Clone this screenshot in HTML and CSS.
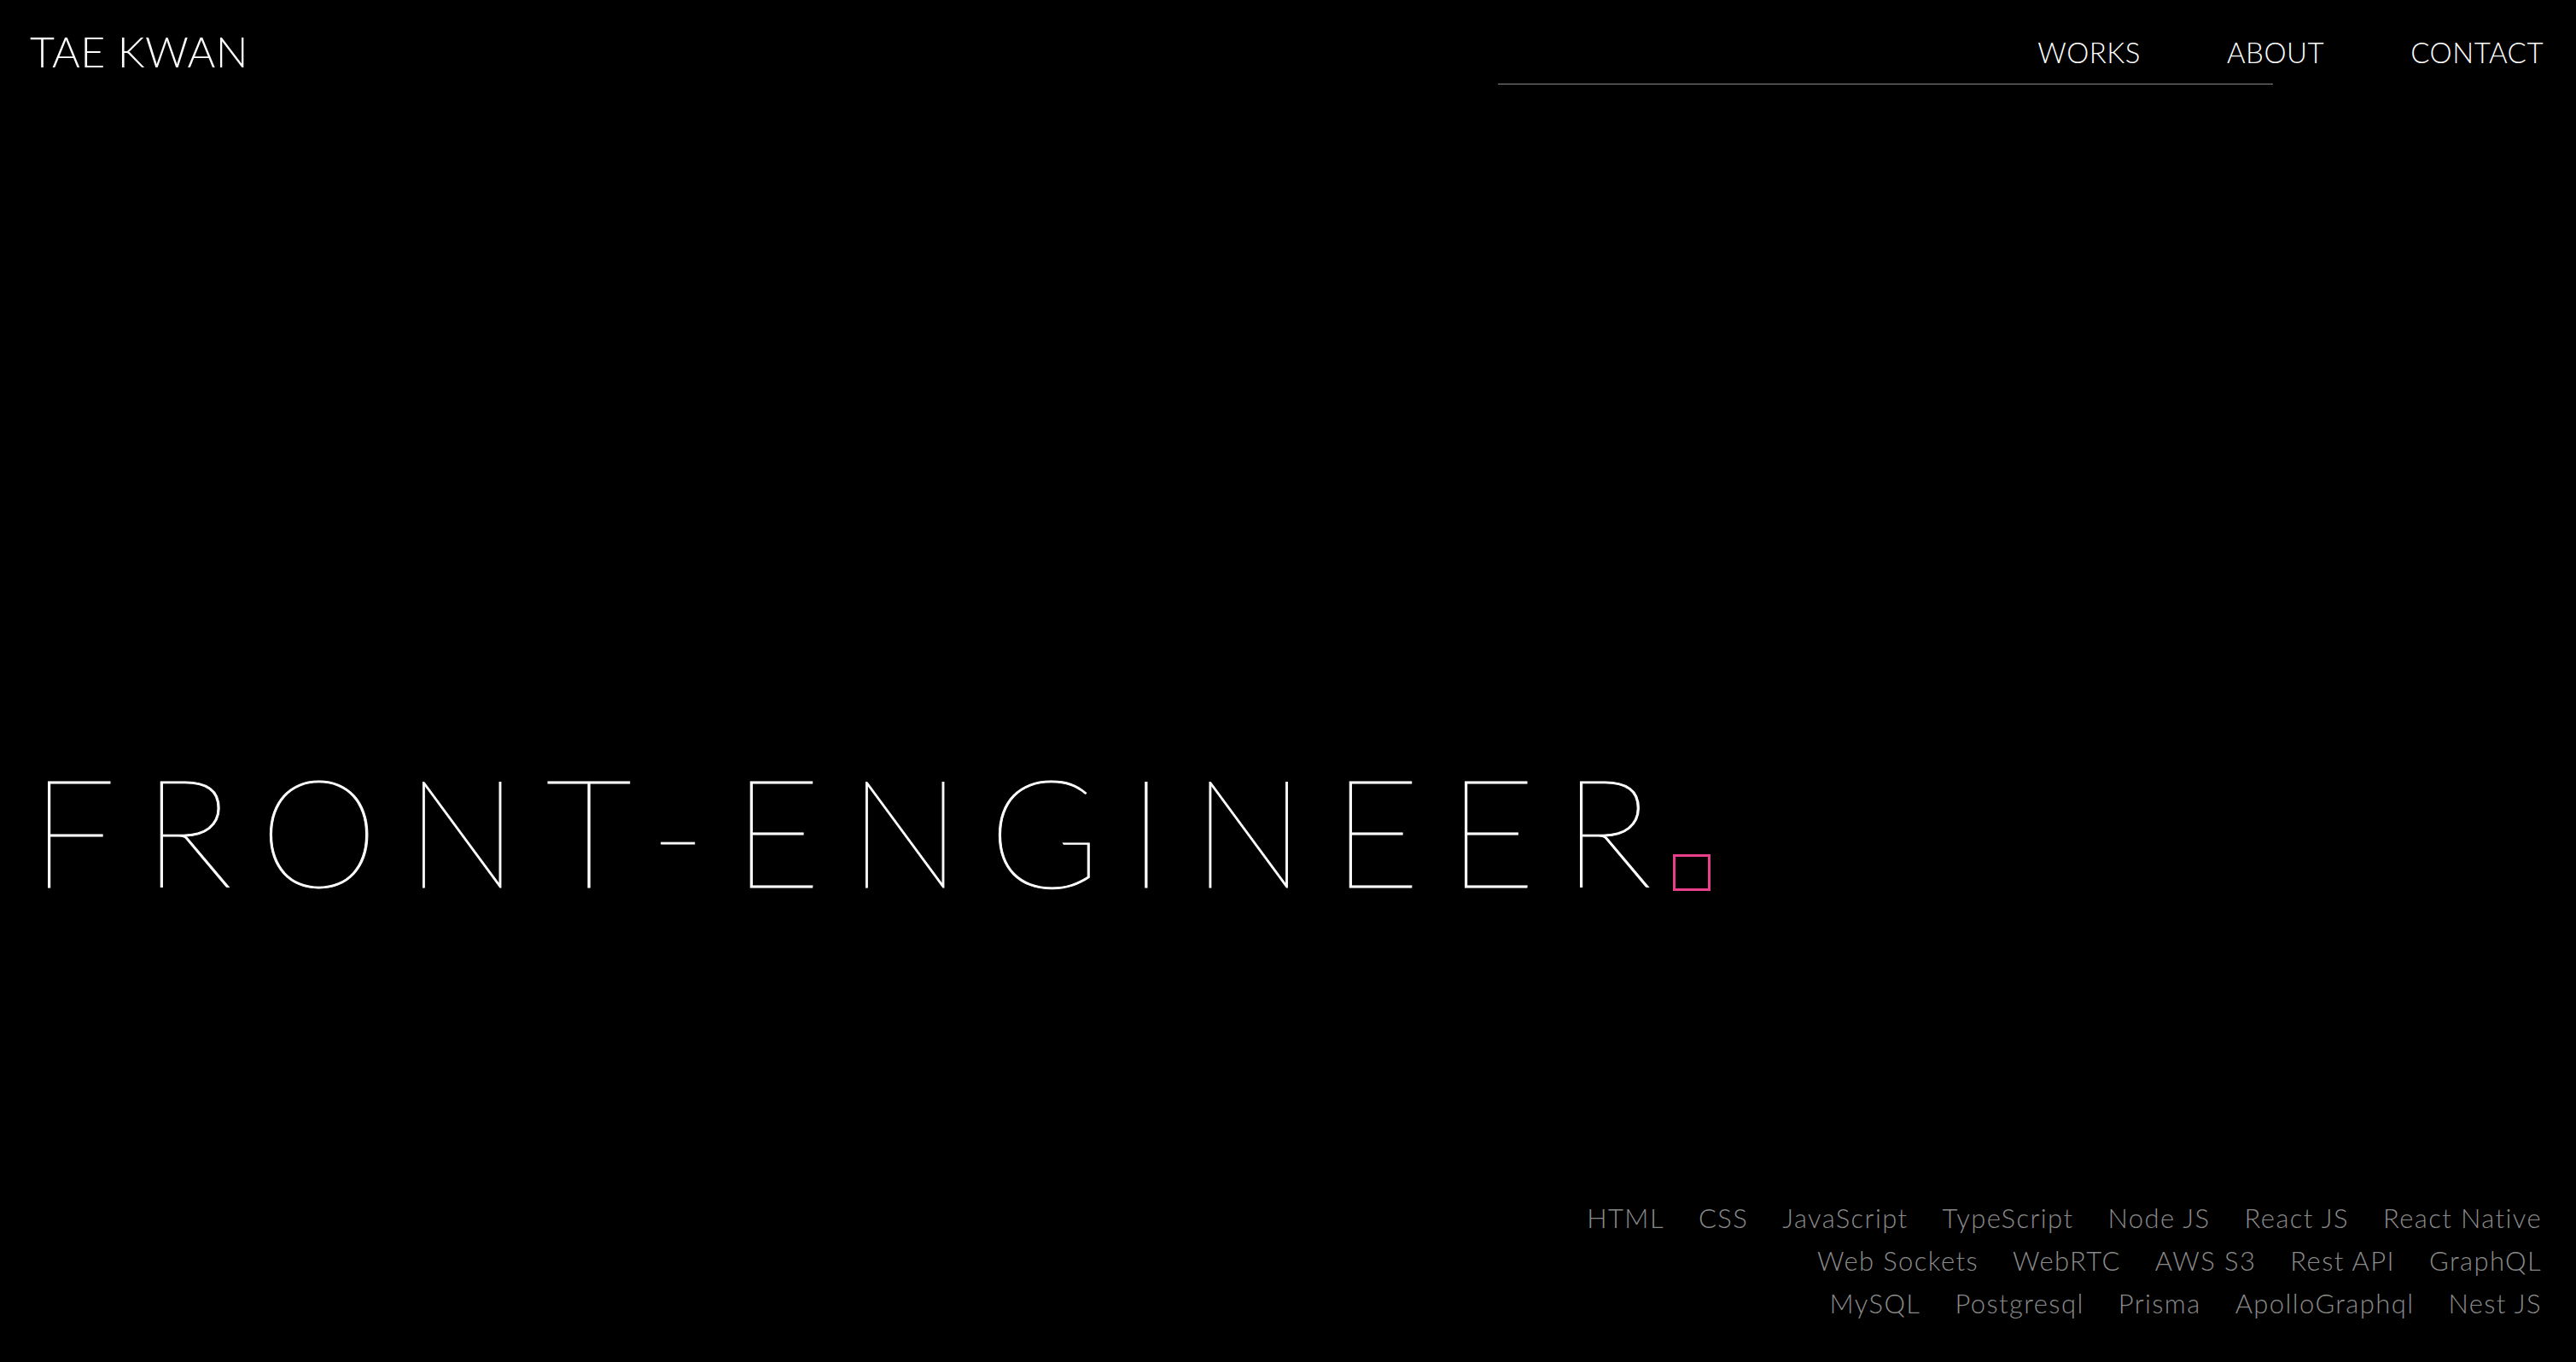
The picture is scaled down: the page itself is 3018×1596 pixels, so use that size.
FILE: index.html
```html
<!DOCTYPE html>
<html lang="en">
<head>
<meta charset="utf-8">
<title>TAE KWAN</title>
<link rel="stylesheet" href="styles.css">
</head>
<body>
<div class="page">
  <header class="header">
    <a class="logo" href="#">TAE KWAN</a>
    <nav class="nav">
      <ul class="nav-links">
        <li><a href="#">WORKS</a></li>
        <li><a href="#">ABOUT</a></li>
        <li><a href="#">CONTACT</a></li>
      </ul>
      <div class="nav-line"></div>
    </nav>
  </header>
  <main class="hero">
    <h1 class="headline"><span class="headline-text">FRONT-ENGINEER</span><span class="cursor"></span></h1>
  </main>
  <section class="skills">
    <ul class="skill-row">
      <li>HTML</li><li>CSS</li><li>JavaScript</li><li>TypeScript</li><li>Node JS</li><li>React JS</li><li>React Native</li>
    </ul>
    <ul class="skill-row">
      <li>Web Sockets</li><li>WebRTC</li><li>AWS S3</li><li>Rest API</li><li>GraphQL</li>
    </ul>
    <ul class="skill-row">
      <li>MySQL</li><li>Postgresql</li><li>Prisma</li><li>ApolloGraphql</li><li>Nest JS</li>
    </ul>
  </section>
</div>
</body>
</html>
```
FILE: styles.css
```css
* { box-sizing: border-box; }
html, body { margin: 0; padding: 0; background: #000; }
body {
  font-family: "Lato", "Inter", "Liberation Sans", sans-serif;
  color: #fff;
}
ul { list-style: none; margin: 0; padding: 0; }
a { color: inherit; text-decoration: none; }

.page {
  height: 100vh;
  display: flex;
  flex-direction: column;
}

.header {
  display: flex;
  justify-content: space-between;
  align-items: flex-start;
  padding: 35px 38px 0 35px;
}
.logo {
  font-size: 50px;
  line-height: 50px;
  font-weight: 300;
  letter-spacing: 0.5px;
}
.nav {
  display: flex;
  flex-direction: column;
  align-items: flex-end;
  padding-top: 10px;
}
.nav-links {
  display: flex;
  gap: 101px;
  font-size: 33px;
  line-height: 33px;
  font-weight: 300;
  letter-spacing: 0.5px;
}
.nav-line {
  width: 908px;
  height: 1px;
  margin-top: 20px;
  margin-right: 317px;
  background: #8a8a8a;
}

.hero {
  flex: 1;
  display: flex;
  align-items: flex-end;
  padding: 0 0 342px 36px;
}
.headline {
  margin: 0;
  font-size: 177px;
  line-height: 177px;
  font-weight: 200;
  white-space: nowrap;
  -webkit-text-stroke: 1px #fff;
}
.headline-text {
  letter-spacing: 32px;
}
.cursor {
  display: inline-block;
  width: 44px;
  height: 43px;
  border: 3px solid #e83e8c;
  margin-left: -8px;
  margin-bottom: -4px;
}

.skills {
  display: flex;
  flex-direction: column;
  align-items: flex-end;
  padding: 0 40px 44px 0;
}
.skill-row {
  display: flex;
  gap: 40px;
  font-size: 31px;
  line-height: 50px;
  font-weight: 300;
  letter-spacing: 1.4px;
  color: #8a8a8a;
}
```
